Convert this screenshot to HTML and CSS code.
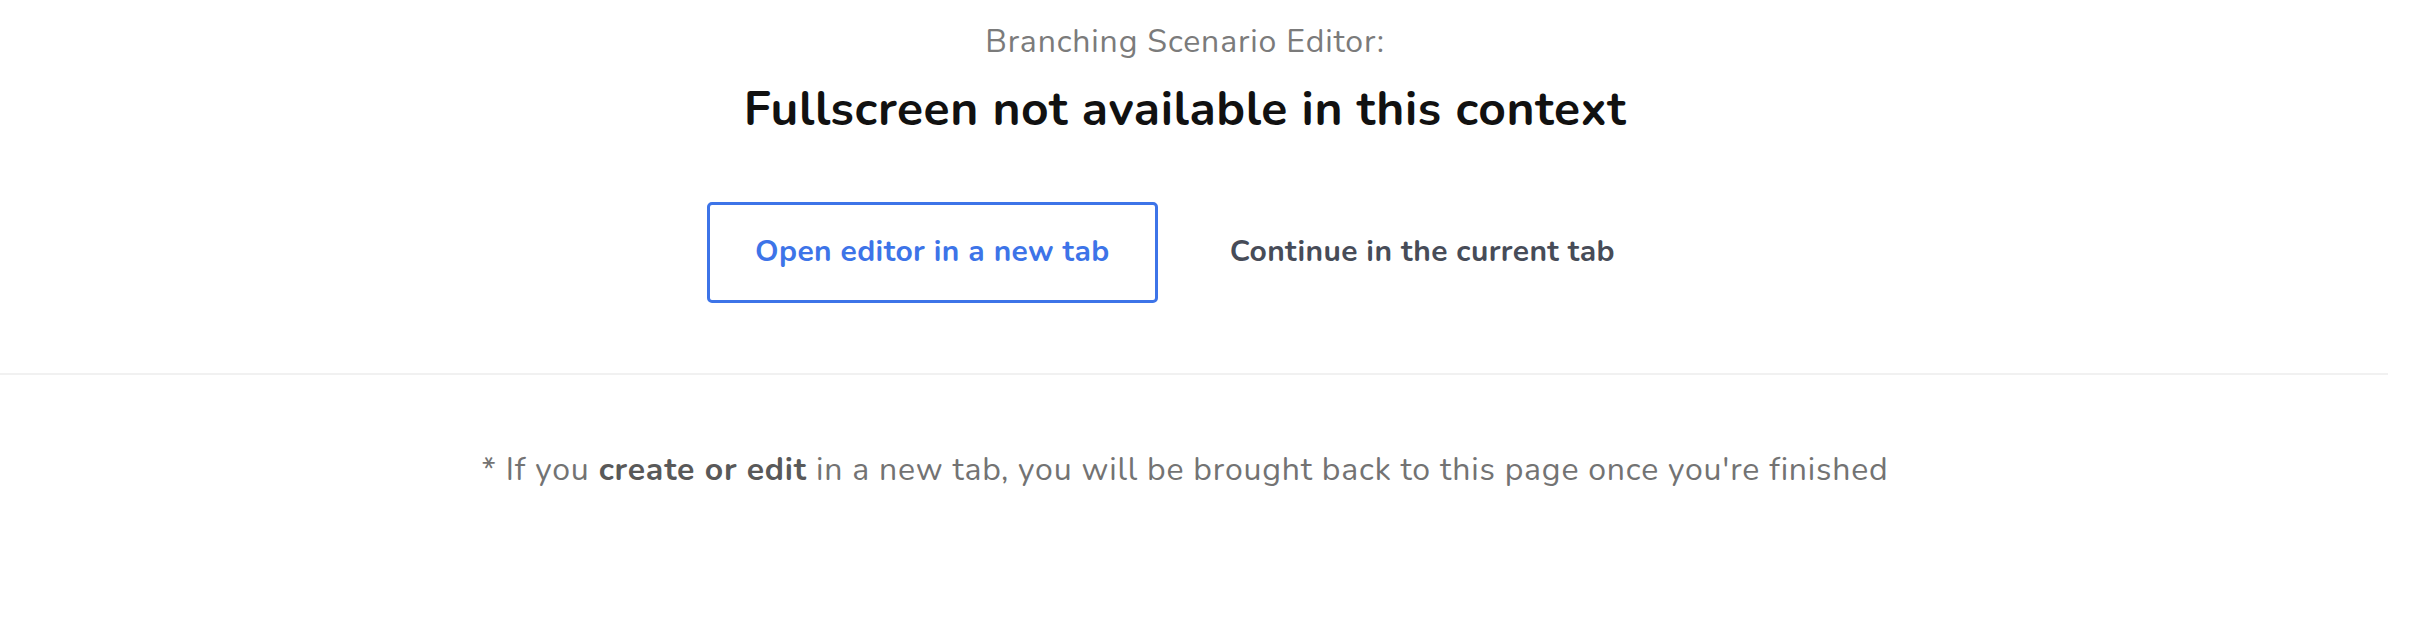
FILE: index.html
```html
<!DOCTYPE html>
<html lang="en">
<head>
    <meta charset="UTF-8">
    <meta name="viewport" content="width=device-width, initial-scale=1.0">
    <title>Branching Scenario Editor</title>
    <link rel="stylesheet" href="styles.css">
</head>
<body>

<div class="page">
    <div class="intro">
        <p class="subtitle">Branching Scenario Editor:</p>
        <h1 class="title">Fullscreen not available in this context</h1>
        <div class="actions">
            <button class="btn btn-outline">Open editor in a new tab</button>
            <button class="btn btn-plain">Continue in the current tab</button>
        </div>
    </div>
    <div class="divider"></div>
    <p class="note">* If you <strong>create or edit</strong> in a new tab, you will be brought back to this page once you're finished</p>
</div>

</body>
</html>
```

FILE: styles.css
```css
body {
    margin: 0;
    background: #fff;
    font-family: "Nunito", Lato, "Open Sans", sans-serif;
}
.page {
    width: 2388px;
}
.intro {
    width: 2370px;
    padding-top: 21px;
    display: flex;
    flex-direction: column;
    align-items: center;
}
.subtitle {
    margin: 0;
    font-size: 32px;
    line-height: 42px;
    letter-spacing: 0.85px;
    color: #7b7b7b;
}
.title {
    margin: 17px 0 0;
    font-size: 48px;
    line-height: 58px;
    letter-spacing: 0.6px;
    font-weight: 700;
    color: #111;
}
.actions {
    display: flex;
    gap: 24px;
    margin-top: 64px;
    margin-bottom: 70px;
}
.btn {
    font-family: inherit;
    font-size: 30px;
    line-height: 42px;
    letter-spacing: 0.4px;
    font-weight: 700;
    padding: 26px 45px 27px;
    border: 3px solid transparent;
    border-radius: 5px;
    background: #fff;
    cursor: pointer;
}
.btn-outline {
    border-color: #3d74e8;
    color: #3d74e8;
}
.btn-plain {
    color: #474c58;
}
.divider {
    height: 2px;
    background: #f1f1f1;
}
.note {
    width: 2370px;
    margin: 74px 0 0;
    text-align: center;
    font-size: 32px;
    line-height: 42px;
    letter-spacing: 0.8px;
    color: #737373;
}
.note strong {
    color: #595959;
}
```
